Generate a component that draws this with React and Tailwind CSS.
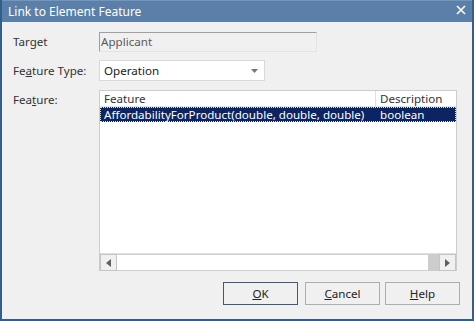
import React from 'react';

const font = { fontFamily: '"Noto Sans", "Open Sans", sans-serif' };

const Label = ({ children }) => (
    <div className="w-[86px] shrink-0 text-[11.6px] text-[#333333]">{children}</div>
);

const DlgButton = ({ children, primary, className = "" }) => (
    <button
        type="button"
        className={
            (primary
                ? "w-[75px] h-[23px] border border-[#3c5a7c] bg-[#f0f0f0] text-[11.6px] text-[#222222] "
                : "w-[75px] h-[23px] border border-[#adadad] bg-[#f0f0f0] text-[11.6px] text-[#222222] ") + className
        }
    >
        {children}
    </button>
);

export default function App() {
    return (
        <div style={font} className="w-[474px] h-[321px] flex flex-col bg-[#f0f0f0] border-x-2 border-b-2 border-[#335e88] overflow-hidden">
            {/* title bar */}
            <div className="h-[22px] shrink-0 flex items-center justify-between bg-[#5a7fa8] border-t border-[#7595ba] pl-[6px] pr-[6px]">
                <span className="text-[12px] text-white leading-none">Link to Element Feature</span>
                <svg width="10" height="10" viewBox="0 0 10 10" className="mb-[4px]">
                    <path d="M1 1 L9 9 M9 1 L1 9" stroke="white" strokeWidth="1.6" />
                </svg>
            </div>

            <div className="flex flex-col pl-[11px] pr-[15px] pt-[10px]">
                {/* target */}
                <div className="flex items-center h-[20px]">
                    <Label>Target</Label>
                    <div className="w-[218px] h-[20px] border border-[#a0a0a0] border-r-[#e3e3e3] border-b-[#e3e3e3] text-[11.6px] text-[#5a5a5a] leading-[17px] pl-[1px]">
                        Applicant
                    </div>
                </div>

                {/* feature type */}
                <div className="flex items-center h-[21px] mt-[8px]">
                    <Label>Fe<span className="underline">a</span>ture Type:</Label>
                    <div className="w-[166px] h-[21px] flex items-center justify-between bg-white border border-[#d9d9d9] pl-[4px] pr-[6px]">
                        <span className="text-[11.6px] text-[#222222]">Operation</span>
                        <svg width="7" height="4" viewBox="0 0 7 4">
                            <path d="M0 0 H7 L3.5 4 Z" fill="#777777" />
                        </svg>
                    </div>
                </div>

                {/* feature list */}
                <div className="flex mt-[9px]">
                    <div className="w-[86px] shrink-0 text-[11.6px] text-[#333333] pt-[1px]">
                        Fea<span className="underline">t</span>ure:
                    </div>
                    <div className="w-[358px] h-[181px] flex flex-col bg-white border border-[#cccccc]">
                        <div className="flex h-[16px] shrink-0 text-[11.6px] text-[#333333] leading-[16px] border-b border-[#e5e5e5]">
                            <div className="w-[276px] pl-[4px] border-r border-[#e0e0e0]">Feature</div>
                            <div className="pl-[4px]">Description</div>
                        </div>
                        <div className="flex h-[15px] shrink-0 text-[11.6px] text-white leading-[13px] bg-[#0c2461] border border-dotted border-[#e8e8c8]">
                            <div className="w-[275px] pl-[3px] whitespace-nowrap">AffordabilityForProduct(double, double, double)</div>
                            <div className="pl-[4px]">boolean</div>
                        </div>
                        <div className="flex-1" />
                        <div className="flex h-[17px] shrink-0 bg-[#f0f0f0] border-t border-[#e0e0e0]">
                            <div className="w-[17px] h-[17px] flex items-center justify-center border border-[#c4c4c4] bg-[#f0f0f0]">
                                <svg width="5" height="8" viewBox="0 0 5 8">
                                    <path d="M5 0 V8 L0 4 Z" fill="#606060" />
                                </svg>
                            </div>
                            <div className="w-[311px] h-[17px] bg-white border-y border-[#d0d0d0]" />
                            <div className="flex-1 bg-[#cdcdcd]" />
                            <div className="w-[17px] h-[17px] flex items-center justify-center border border-[#c4c4c4] bg-[#f0f0f0]">
                                <svg width="5" height="8" viewBox="0 0 5 8">
                                    <path d="M0 0 V8 L5 4 Z" fill="#606060" />
                                </svg>
                            </div>
                        </div>
                    </div>
                </div>

                {/* buttons */}
                <div className="flex items-start justify-end mt-[11px] -mr-[3px]">
                    <DlgButton primary><span className="underline">O</span>K</DlgButton>
                    <DlgButton className="ml-[7px]"><span className="underline">C</span>ancel</DlgButton>
                    <DlgButton className="ml-[5px]"><span className="underline">H</span>elp</DlgButton>
                </div>
            </div>
        </div>
    );
}
